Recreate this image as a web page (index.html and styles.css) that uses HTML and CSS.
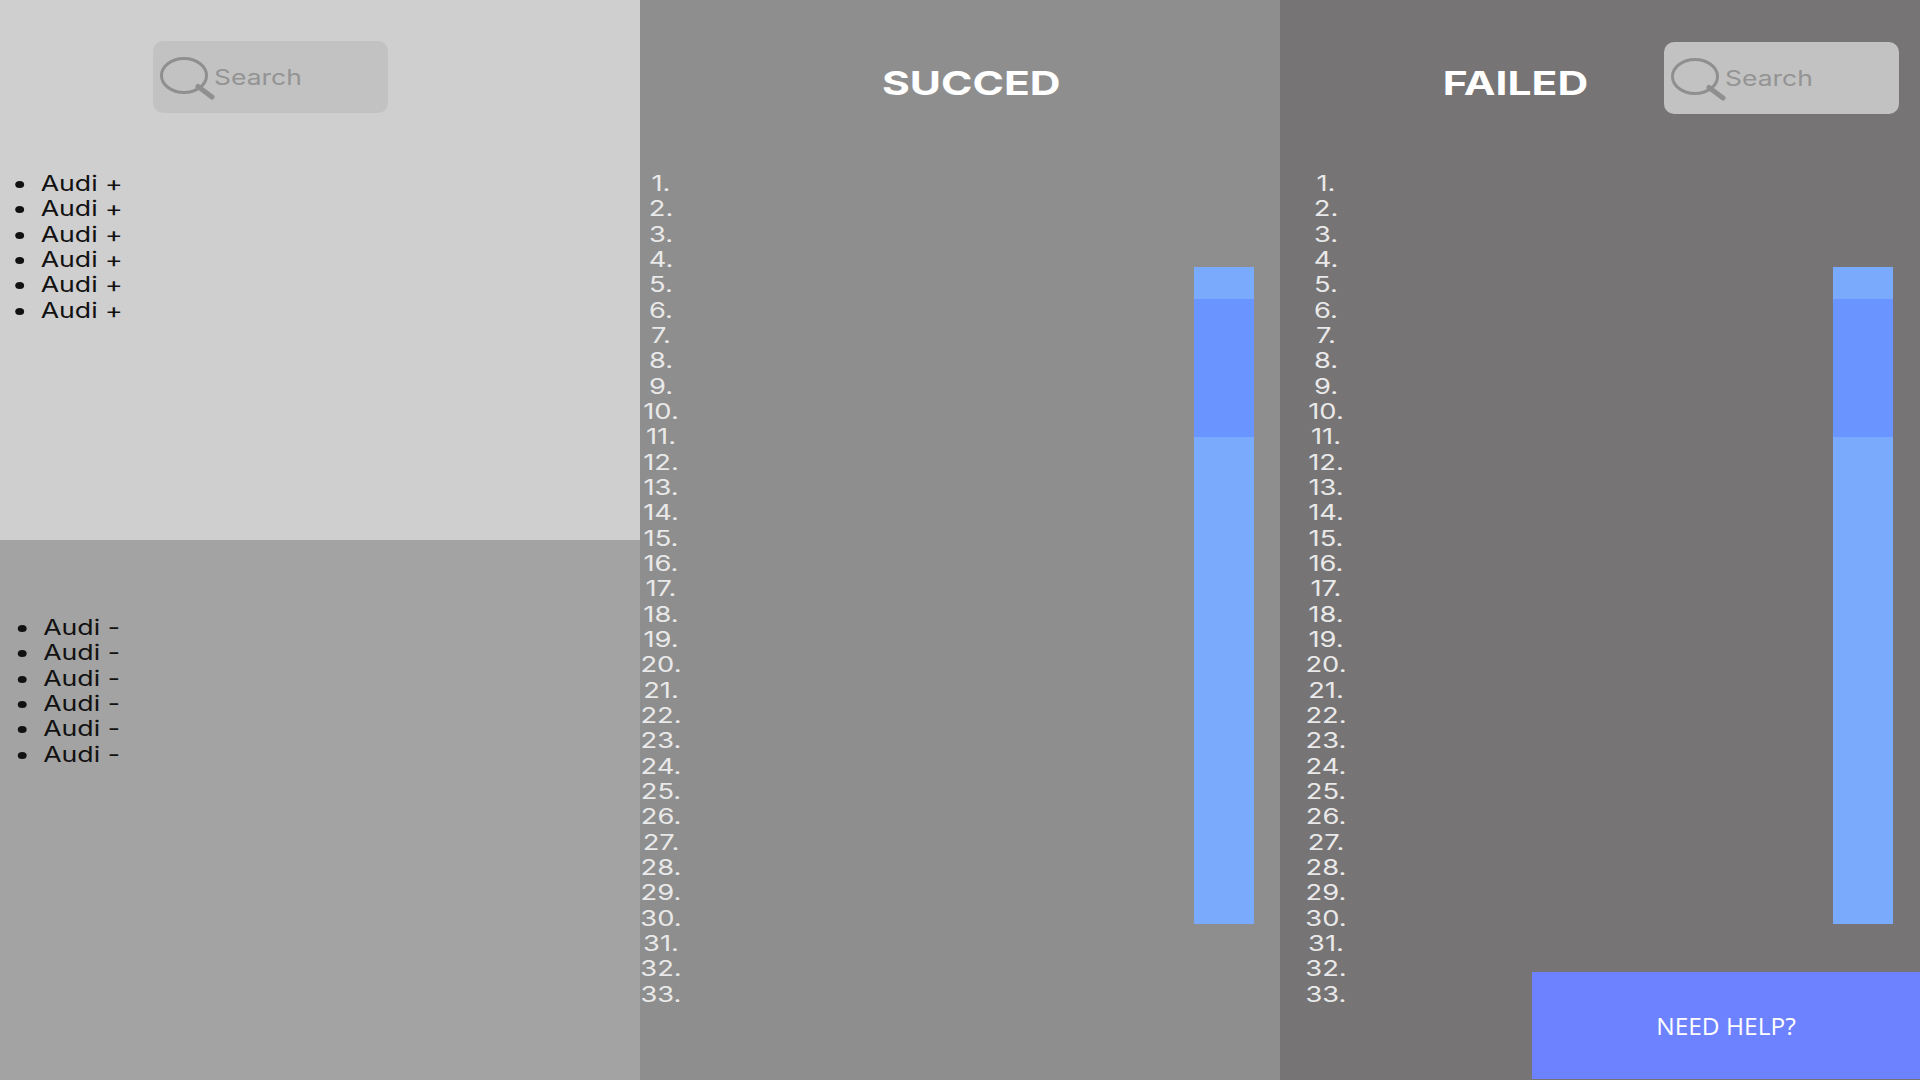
FILE: index.html
```html
<!DOCTYPE html>
<html>
<head>
  <title>Audi</title>
  <link rel="stylesheet" href="styles.css">
</head>
<body>
  <div class="page">
    <div class="col-left">
      <div class="panel panel-plus">
        <div class="search search-left">
          <svg class="search-icon" viewBox="0 0 68 60"><ellipse cx="31" cy="25.5" rx="22.5" ry="17"/><path class="handle" d="M45 36.5 L59 47"/></svg>
          <span class="search-text">Search</span>
        </div>
        <ul class="brands brands-plus">
          <li>Audi +</li><li>Audi +</li><li>Audi +</li><li>Audi +</li><li>Audi +</li><li>Audi +</li>
        </ul>
      </div>
      <div class="panel panel-minus">
        <ul class="brands brands-minus">
          <li>Audi -</li><li>Audi -</li><li>Audi -</li><li>Audi -</li><li>Audi -</li><li>Audi -</li>
        </ul>
      </div>
    </div>

    <div class="col col-succed">
      <div class="col-head">
        <h1 class="title title-succed">SUCCED</h1>
      </div>
      <div class="col-body">
        <ol class="numbers numbers-succed">
          <li>1.</li><li>2.</li><li>3.</li><li>4.</li><li>5.</li><li>6.</li><li>7.</li><li>8.</li><li>9.</li><li>10.</li><li>11.</li>
          <li>12.</li><li>13.</li><li>14.</li><li>15.</li><li>16.</li><li>17.</li><li>18.</li><li>19.</li><li>20.</li><li>21.</li><li>22.</li>
          <li>23.</li><li>24.</li><li>25.</li><li>26.</li><li>27.</li><li>28.</li><li>29.</li><li>30.</li><li>31.</li><li>32.</li><li>33.</li>
        </ol>
        <div class="scrollbar"><div class="thumb"></div></div>
      </div>
    </div>

    <div class="col col-failed">
      <div class="col-head">
        <h1 class="title title-failed">FAILED</h1>
        <div class="search search-right">
          <svg class="search-icon" viewBox="0 0 68 60"><ellipse cx="31" cy="25.5" rx="22.5" ry="17"/><path class="handle" d="M45 36.5 L59 47"/></svg>
          <span class="search-text">Search</span>
        </div>
      </div>
      <div class="col-body">
        <ol class="numbers numbers-failed">
          <li>1.</li><li>2.</li><li>3.</li><li>4.</li><li>5.</li><li>6.</li><li>7.</li><li>8.</li><li>9.</li><li>10.</li><li>11.</li>
          <li>12.</li><li>13.</li><li>14.</li><li>15.</li><li>16.</li><li>17.</li><li>18.</li><li>19.</li><li>20.</li><li>21.</li><li>22.</li>
          <li>23.</li><li>24.</li><li>25.</li><li>26.</li><li>27.</li><li>28.</li><li>29.</li><li>30.</li><li>31.</li><li>32.</li><li>33.</li>
        </ol>
        <div class="scrollbar scrollbar-failed"><div class="thumb"></div></div>
      </div>
      <div class="help">NEED HELP?</div>
    </div>
  </div>
</body>
</html>
```

FILE: styles.css
```css
html, body {
  margin: 0;
  height: 100%;
  overflow: hidden;
}
body {
  font-family: Inter, "Liberation Sans", sans-serif;
}
.page {
  display: grid;
  grid-template-columns: 640px 640px 640px;
  height: 1080px;
}
.col-left {
  display: grid;
  grid-template-rows: 540px 540px;
}
.panel-plus {
  background-color: #cfcfcf;
  padding-top: 41px;
}
.panel-minus {
  background-color: #a3a3a3;
  padding-top: 75px;
}
.search {
  display: flex;
  align-items: center;
  width: 235px;
  height: 72px;
  background-color: #c2c2c2;
  border-radius: 10px;
}
.search-left {
  margin-left: 153px;
}
.search-right {
  margin-left: auto;
  margin-top: 42px;
}
.search-icon {
  width: 68px;
  height: 60px;
  margin-top: 6px;
  flex-shrink: 0;
}
.search-icon ellipse {
  fill: none;
  stroke: #8f8f8f;
  stroke-width: 3;
}
.search-icon .handle {
  fill: none;
  stroke: #8f8f8f;
  stroke-width: 5;
  stroke-linecap: round;
}
.search-text {
  font-size: 21px;
  color: #949494;
  transform: scaleX(1.26);
  transform-origin: left center;
  margin-left: -7px;
}
.brands {
  margin: 0;
  padding-left: 32px;
  font-size: 21px;
  line-height: 25.33px;
  color: #111;
  transform: scaleX(1.27);
  transform-origin: left center;
}
.brands-plus {
  margin-top: 58px;
}
.brands-minus {
  padding-left: 34px;
}
.col {
  position: relative;
  display: flex;
  flex-direction: column;
}
.col-succed {
  background-color: #8e8e8e;
}
.col-failed {
  background-color: #767475;
}
.col-head {
  display: flex;
  height: 171px;
  padding-right: 21px;
}
.title {
  margin: 64px 0 0 0;
  font-size: 33px;
  line-height: 38px;
  font-weight: 700;
  color: #fff;
  transform: scaleX(1.29);
}
.title-succed {
  margin-left: 262px;
}
.title-failed {
  margin-left: 179px;
}
.col-body {
  display: flex;
  justify-content: space-between;
  padding-right: 26px;
}
.numbers {
  margin: 0;
  padding: 0;
  list-style: none;
  width: 40px;
  font-size: 21px;
  line-height: 25.33px;
  text-align: center;
  color: #e9e9e9;
  transform: scaleX(1.3);
}
.numbers-succed {
  margin-left: 1px;
}
.numbers-failed {
  margin-left: 26px;
}
.scrollbar {
  width: 60px;
  height: 657px;
  margin-top: 96px;
  padding-top: 32px;
  box-sizing: border-box;
  background-color: #7aaafc;
}
.scrollbar-failed {
  margin-right: 1px;
}
.thumb {
  height: 138px;
  background-color: #6a94ff;
}
.help {
  position: absolute;
  right: 0;
  bottom: 1px;
  display: flex;
  align-items: center;
  justify-content: center;
  width: 388px;
  height: 107px;
  background-color: #6d82ff;
  color: #fff;
  font-family: "Open Sans", sans-serif;
  font-size: 24.5px;
}
```
